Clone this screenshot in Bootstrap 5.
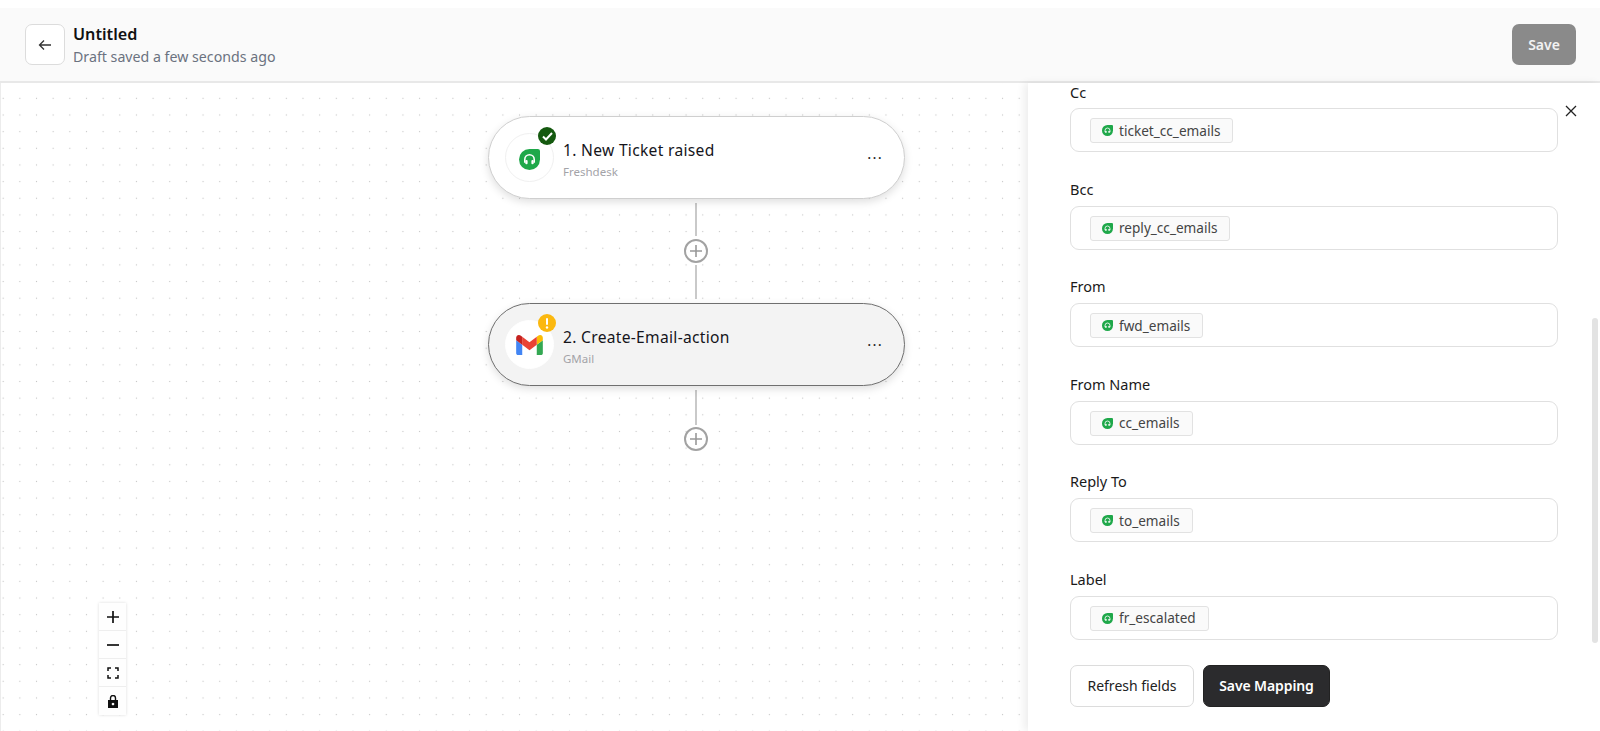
<!DOCTYPE html>
<html lang="en">
<head>
<meta charset="utf-8">
<title>Untitled</title>
<link href="https://cdn.jsdelivr.net/npm/bootstrap@5.3.0/dist/css/bootstrap.min.css" rel="stylesheet">
<style>
html,body{height:731px;overflow:hidden;}
body{font-family:"Noto Sans",sans-serif;background:#fff;color:#111;padding-top:8px;}
.app-head{height:75px;background:#fafafa;border-bottom:2px solid #e8e8e8;padding:16px 24px 0 25px;}
.back-btn{width:40px;height:41px;background:#fff;border:1px solid #dcdcdc;border-radius:7px;}
.head-title{font-size:16.2px;font-weight:600;line-height:20px;color:#111;}
.head-sub{font-size:14.2px;line-height:22px;color:#6b7280;margin-top:2px;}
.save-top{width:64px;height:41px;background:#8a8a8a;border:0;border-radius:7px;color:#f2f2f2;font-size:14px;font-weight:600;padding:0;}
.work{height:648px;}
.flow-canvas{flex:1 1 auto;position:relative;border-left:1px solid #ececec;background-color:#fff;background-image:radial-gradient(circle,#c4c4c4 .7px,transparent 1px);background-size:16.67px 16.67px;background-position:10.5px 7px;overflow:hidden;}
.side-panel{width:572px;flex:none;position:relative;background:#fff;box-shadow:-4px 0 8px rgba(0,0,0,.07);padding:0 42px 0 42px;overflow:hidden;}
.flow-node{position:absolute;left:487px;width:417px;height:83px;border-radius:42px;background:#fff;border:1px solid #cfcfcf;box-shadow:0 3px 8px rgba(0,0,0,.13);padding:0 21px 0 16px;}
.flow-node.is-active{background:#f3f3f3;border-color:#6f6f6f;}
.node-ico{width:49px;height:49px;border-radius:50%;background:#fff;border:1px solid #f0f0f0;position:relative;flex:none;}
.is-active .node-ico{border-color:#fff;}
.node-flag{position:absolute;right:-3px;top:-7px;width:18px;height:18px;border-radius:50%;}
.node-txt{margin-left:1px;padding-top:4px;}
.node-name{font-size:15.6px;line-height:21px;color:#15151b;letter-spacing:.3px;}
.node-app{font-size:11.5px;line-height:16px;color:#a3a3a8;margin-top:3px;}
.node-more{font-size:15px;color:#222;line-height:1;letter-spacing:1.2px;}
.wire{position:absolute;left:693.5px;width:2px;background:#c9c9c9;}
.plus-btn{position:absolute;left:683px;width:24px;height:24px;border:2px solid #a2a2a2;border-radius:50%;background:#fff;}
.map-field{margin-bottom:26.5px;}
.map-label{font-size:14.5px;line-height:20px;color:#1a1a1a;margin-bottom:7px;}
.map-box{height:44px;border:1px solid #e0e0e0;border-radius:9px;background:#fff;padding:9px 0 0 19px;}
.chip-tag{height:25px;border:1px solid #e2e2e2;border-radius:3px;background:#fafafa;padding:0 12px 0 11px;font-size:13.6px;color:#444;gap:6px;line-height:1;}
.btn-refresh{width:124px;height:42px;background:#fff;border:1px solid #dcdcdc;border-radius:7px;font-size:14px;color:#222;padding:0;}
.btn-mapping{width:127px;height:42px;background:#2b2b2d;border:1px solid #222;border-radius:7px;font-size:14px;font-weight:600;color:#fff;padding:0;letter-spacing:-.1px;}
.btn-row{gap:9px;margin-top:25px;}
.close-x{position:absolute;top:21px;right:22px;width:14px;height:14px;background:none;border:0;padding:0;line-height:0;}
.fake-scroll{position:absolute;right:2px;top:235px;width:6px;height:325px;background:#e3e3e3;border-radius:3px;}
.zoom-ctl{position:absolute;left:98px;top:520px;width:27px;background:#fff;box-shadow:0 0 3px rgba(0,0,0,.14);}
.zoom-ctl button{display:flex;align-items:center;justify-content:center;width:27px;height:28px;background:#fefefe;border:0;border-bottom:1px solid #eee;padding:0;}
.zoom-ctl button:last-child{border-bottom:0;}
</style>
</head>
<body>
<svg width="0" height="0" class="position-absolute"><defs>
  <symbol id="fd-mark" viewBox="0 0 20 20"><path fill="#1fa84a" d="M10 0h8a2 2 0 0 1 2 2v8a10 10 0 1 1-10-10z"/><path fill="none" stroke="#fff" stroke-width="1.500" d="M5.500 13V10a4.500 4.500 0 0 1 9 0v3"/><rect x="6" y="10.500" width="2.200" height="4" rx="1" fill="#fff"/><rect x="11.800" y="10.500" width="2.200" height="4" rx="1" fill="#fff"/></symbol>
</defs></svg>
<header class="app-head d-flex justify-content-between">
  <div class="d-flex gap-2">
    <button class="back-btn d-flex align-items-center justify-content-center p-0" aria-label="Back">
      <svg width="14" height="12" viewBox="0 0 14 12" fill="none" stroke="#333" stroke-width="1.3"><path d="M13 6H1.500M6 1.500 1.500 6 6 10.500"/></svg>
    </button>
    <div>
      <div class="head-title">Untitled</div>
      <div class="head-sub">Draft saved a few seconds ago</div>
    </div>
  </div>
  <button class="save-top">Save</button>
</header>
<div class="work d-flex">
  <main class="flow-canvas">
    <div class="wire" style="top:120px;height:33px"></div>
    <div class="wire" style="top:182px;height:34px"></div>
    <div class="wire" style="top:307px;height:35px"></div>
    <div class="plus-btn d-flex align-items-center justify-content-center" style="top:156px"><svg width="12" height="12" viewBox="0 0 12 12" stroke="#999" stroke-width="1.6"><path d="M6 0v12M0 6h12"/></svg></div>
    <div class="plus-btn d-flex align-items-center justify-content-center" style="top:344px"><svg width="12" height="12" viewBox="0 0 12 12" stroke="#999" stroke-width="1.6"><path d="M6 0v12M0 6h12"/></svg></div>

    <div class="flow-node d-flex align-items-center gap-2" style="top:33px">
      <div class="node-ico d-flex align-items-center justify-content-center">
        <svg width="21" height="21" class="mt-1"><use href="#fd-mark"/></svg>
        <span class="node-flag d-flex align-items-center justify-content-center" style="background:#14590f"><svg width="11" height="9" viewBox="0 0 11 9" fill="none" stroke="#fff" stroke-width="2"><path d="M1 4.500 4 7.500 10 1"/></svg></span>
      </div>
      <div class="node-txt flex-grow-1">
        <div class="node-name">1. New Ticket raised</div>
        <div class="node-app">Freshdesk</div>
      </div>
      <div class="node-more">···</div>
    </div>

    <div class="flow-node is-active d-flex align-items-center gap-2" style="top:220px">
      <div class="node-ico d-flex align-items-center justify-content-center">
        <svg width="27" height="20" viewBox="52 42 88 66"><path fill="#4285f4" d="M58 108h14V74L52 59v43c0 3.320 2.690 6 6 6"/><path fill="#34a853" d="M120 108h14c3.320 0 6-2.690 6-6V59l-20 15"/><path fill="#fbbc04" d="M120 48v26l20-15v-8c0-7.420-8.470-11.650-14.400-7.200"/><path fill="#ea4335" d="M72 74V48l24 18 24-18v26L96 92"/><path fill="#c5221f" d="M52 51v8l20 15V48l-5.600-4.200c-5.940-4.450-14.400-.22-14.400 7.200"/></svg>
        <span class="node-flag d-flex align-items-center justify-content-center" style="background:#fbb80f"><svg width="4" height="11" viewBox="0 0 4 11" fill="#fff"><rect x="1" y="0" width="2" height="7" rx="1"/><circle cx="2" cy="9.500" r="1.200"/></svg></span>
      </div>
      <div class="node-txt flex-grow-1">
        <div class="node-name">2. Create-Email-action</div>
        <div class="node-app">GMail</div>
      </div>
      <div class="node-more">···</div>
    </div>

    <div class="zoom-ctl">
      <button aria-label="Zoom in"><svg width="14" height="14" viewBox="0 0 14 14" stroke="#111" stroke-width="1.700"><path d="M7 1v12M1 7h12"/></svg></button>
      <button aria-label="Zoom out"><svg width="14" height="14" viewBox="0 0 14 14" stroke="#111" stroke-width="1.700"><path d="M1 7h12"/></svg></button>
      <button aria-label="Fit"><svg width="12" height="12" viewBox="0 0 12 12" fill="none" stroke="#111" stroke-width="1.500"><path d="M1 4V1h3M8 1h3v3M11 8v3H8M4 11H1V8"/></svg></button>
      <button aria-label="Lock"><svg width="10" height="13" viewBox="0 0 10 13"><path fill="none" stroke="#111" stroke-width="1.400" d="M2.500 5V3a2.500 2.500 0 0 1 5 0v2"/><path fill="#111" fill-rule="evenodd" d="M0 5h10v8H0zM5 7.700a1.300 1.300 0 1 0 .01 0z"/></svg></button>
    </div>
  </main>

  <aside class="side-panel">
    <section class="map-field" style="margin-top:-1px">
      <div class="map-label" style="margin-bottom:6px">Cc</div>
      <div class="map-box"><span class="chip-tag d-inline-flex align-items-center"><svg width="11" height="11"><use href="#fd-mark"/></svg>ticket_cc_emails</span></div>
    </section>
    <section class="map-field">
      <div class="map-label">Bcc</div>
      <div class="map-box"><span class="chip-tag d-inline-flex align-items-center"><svg width="11" height="11"><use href="#fd-mark"/></svg>reply_cc_emails</span></div>
    </section>
    <section class="map-field">
      <div class="map-label">From</div>
      <div class="map-box"><span class="chip-tag d-inline-flex align-items-center"><svg width="11" height="11"><use href="#fd-mark"/></svg>fwd_emails</span></div>
    </section>
    <section class="map-field">
      <div class="map-label">From Name</div>
      <div class="map-box"><span class="chip-tag d-inline-flex align-items-center"><svg width="11" height="11"><use href="#fd-mark"/></svg>cc_emails</span></div>
    </section>
    <section class="map-field">
      <div class="map-label">Reply To</div>
      <div class="map-box"><span class="chip-tag d-inline-flex align-items-center"><svg width="11" height="11"><use href="#fd-mark"/></svg>to_emails</span></div>
    </section>
    <section class="map-field mb-0">
      <div class="map-label">Label</div>
      <div class="map-box"><span class="chip-tag d-inline-flex align-items-center"><svg width="11" height="11"><use href="#fd-mark"/></svg>fr_escalated</span></div>
    </section>
    <div class="btn-row d-flex">
      <button class="btn-refresh">Refresh fields</button>
      <button class="btn-mapping">Save Mapping</button>
    </div>
    <button class="close-x" aria-label="Close"><svg width="12" height="12" viewBox="0 0 12 12" stroke="#222" stroke-width="1.300"><path d="M1 1l10 10M11 1 1 11"/></svg></button>
    <div class="fake-scroll"></div>
  </aside>
</div>
<script src="https://cdn.jsdelivr.net/npm/bootstrap@5.3.0/dist/js/bootstrap.bundle.min.js"></script>
</body>
</html>
